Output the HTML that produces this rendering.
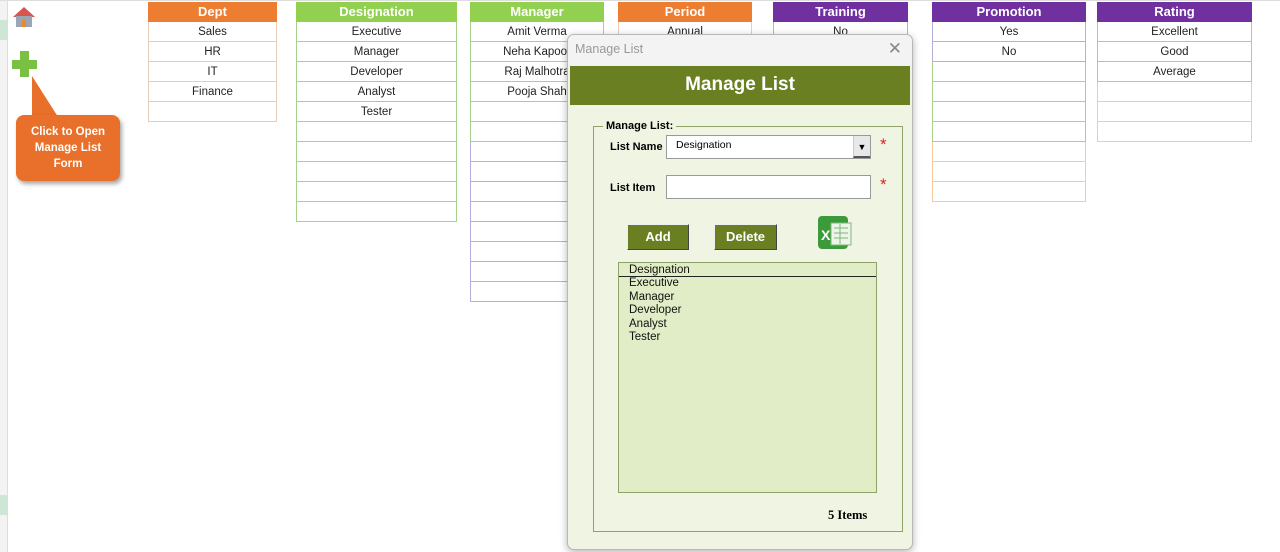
<!DOCTYPE html>
<html><head><meta charset="utf-8">
<style>
*{margin:0;padding:0;box-sizing:border-box}
body{width:1280px;height:552px;background:#fff;position:relative;overflow:hidden;font-family:"Liberation Sans",sans-serif}
.t{position:absolute;top:2px}
.h{height:20px;color:#fff;font-weight:bold;font-size:13px;text-align:center;line-height:20px}
.r{height:20px;border:1px solid #e8cdbd;border-top:none;font-size:11.5px;text-align:center;line-height:21px;color:#222;background:#fff}
.g .r{border-color:#a8d08d}
.p .r{border-color:#b4b0dc}
.a{position:absolute}
</style></head><body>
<div class="a" style="left:0;top:0;width:8px;height:552px;background:#f3f3f3;border-right:1px solid #ddd"></div>
<div class="a" style="left:0;top:20px;width:8px;height:20px;background:#cfe6d6"></div>
<div class="a" style="left:0;top:495px;width:8px;height:20px;background:#cfe6d6"></div>
<div class="a" style="left:0;top:0;width:1280px;height:1px;background:#ddd"></div>
<svg class="a" style="left:12px;top:6px" width="24" height="22" viewBox="0 0 24 22"><polygon points="12,1 23,11 1,11" fill="#d9534f"/><rect x="4" y="10" width="16" height="11" fill="#9aa5b5"/><rect x="10" y="14" width="4" height="7" fill="#e8892c"/></svg>
<div class="a" style="left:20px;top:51px;width:9px;height:26px;background:#7ac143"></div>
<div class="a" style="left:12px;top:60px;width:25px;height:9px;background:#7ac143"></div>
<svg class="a" style="left:28px;top:74px" width="40" height="48"><polygon points="4,2 4,46 32,46" fill="#e8702a"/></svg>
<div class="a" style="left:16px;top:115px;width:104px;height:66px;background:#e8702a;border-radius:8px;box-shadow:2px 3px 4px rgba(0,0,0,.35);color:#fff;font-weight:bold;font-size:11.5px;text-align:center;line-height:16px;padding-top:9px">Click to Open<br>Manage List<br>Form</div>

<div class="t" style="left:148px;width:129px"><div class="h" style="background:#ed7d31">Dept</div><div class="r">Sales</div><div class="r">HR</div><div class="r">IT</div><div class="r">Finance</div><div class="r"></div></div>
<div class="t g" style="left:296px;width:161px"><div class="h" style="background:#92d050">Designation</div><div class="r">Executive</div><div class="r">Manager</div><div class="r">Developer</div><div class="r">Analyst</div><div class="r">Tester</div><div class="r"></div><div class="r"></div><div class="r"></div><div class="r"></div><div class="r"></div></div>
<div class="t p" style="left:470px;width:134px"><div class="h" style="background:#92d050">Manager</div><div class="r" style="border-color:#a8d08d">Amit Verma</div><div class="r" style="border-color:#a8d08d">Neha Kapoor</div><div class="r" style="border-color:#a8d08d">Raj Malhotra</div><div class="r" style="border-color:#a8d08d">Pooja Shah</div><div class="r" style="border-color:#a8d08d"></div><div class="r" style="border-color:#a8d08d"></div><div class="r"></div><div class="r"></div><div class="r"></div><div class="r"></div><div class="r"></div><div class="r"></div><div class="r"></div><div class="r"></div></div>
<div class="t" style="left:618px;width:134px"><div class="h" style="background:#ed7d31">Period</div><div class="r">Annual</div></div>
<div class="t p" style="left:773px;width:135px"><div class="h" style="background:#7030a0">Training</div><div class="r">No</div></div>
<div class="t p" style="left:932px;width:154px"><div class="h" style="background:#7030a0">Promotion</div><div class="r">Yes</div><div class="r">No</div><div class="r" style="border-color:#a8d08d"></div><div class="r" style="border-color:#a8d08d"></div><div class="r" style="border-color:#a8d08d"></div><div class="r" style="border-color:#a8d08d"></div><div class="r" style="border-color:#f8cb9c"></div><div class="r" style="border-color:#f8cb9c"></div><div class="r" style="border-color:#f8cb9c"></div></div>
<div class="t p" style="left:1097px;width:155px"><div class="h" style="background:#7030a0">Rating</div><div class="r" style="border-color:#a8d08d">Excellent</div><div class="r" style="border-color:#a8d08d">Good</div><div class="r" style="border-color:#a8d08d">Average</div><div class="r" style="border-color:#f8cb9c"></div><div class="r" style="border-color:#f8cb9c"></div><div class="r" style="border-color:#f8cb9c"></div></div>

<div class="a" style="left:567px;top:34px;width:346px;height:516px;background:#f0f5e3;border:1px solid #b8b8b8;border-radius:7px;box-shadow:0 2px 8px rgba(0,0,0,.3);overflow:hidden">
  <div style="height:30px;background:#f3f3f3;color:#999;font-size:12.5px;line-height:28px;padding-left:7px;position:relative">Manage List<span style="position:absolute;right:10px;top:0;font-size:17px;color:#888">✕</span></div>
  <div style="position:absolute;left:2px;top:31px;width:340px;height:39px;background:#6a7f22;color:#fff;font-weight:bold;font-size:19px;text-align:center;line-height:38px">Manage List</div>
  <div style="position:absolute;left:25px;top:91px;width:310px;height:406px;border:1px solid #8fa26a"></div>
  <div style="position:absolute;left:35px;top:85px;background:#f0f5e3;padding:0 3px;font-weight:bold;font-size:11px">Manage List:</div>
  <div style="position:absolute;left:42px;top:106px;font-weight:bold;font-size:11px">List Name</div>
  <div style="position:absolute;left:98px;top:100px;width:205px;height:24px;background:#fff;border:1px solid #999;font-size:10.5px;padding:3px 9px">Designation</div>
  <div style="position:absolute;left:285px;top:101px;width:17px;height:22px;background:#e8e8e8;border-left:1px solid #ccc;border-bottom:2px solid #555;font-size:9px;text-align:center;line-height:22px">▼</div>
  <div style="position:absolute;left:312px;top:100px;color:#d22;font-size:17px">*</div>
  <div style="position:absolute;left:42px;top:147px;font-weight:bold;font-size:11px">List Item</div>
  <div style="position:absolute;left:98px;top:140px;width:205px;height:24px;background:#fff;border:1px solid #999"></div>
  <div style="position:absolute;left:312px;top:140px;color:#d22;font-size:17px">*</div>
  <div style="position:absolute;left:59px;top:189px;width:62px;height:26px;background:#6a7f22;border:1px solid #444;border-top-color:#eee;border-left-color:#eee;color:#fff;font-weight:bold;font-size:13px;text-align:center;line-height:24px">Add</div>
  <div style="position:absolute;left:146px;top:189px;width:63px;height:26px;background:#6a7f22;border:1px solid #444;border-top-color:#eee;border-left-color:#eee;color:#fff;font-weight:bold;font-size:13px;text-align:center;line-height:24px">Delete</div>
  <svg style="position:absolute;left:249px;top:180px" width="36" height="36" viewBox="0 0 36 36"><rect x="1" y="1" width="30" height="33" rx="4" fill="#3c9a3a"/><rect x="14" y="8" width="20" height="22" fill="#eef5e8" stroke="#7fb77c"/><path d="M17 13h14M17 18h14M17 23h14M23 9v20" stroke="#7fb77c"/><text x="4" y="25" font-family="Liberation Sans" font-weight="bold" font-size="14" fill="#fff">X</text></svg>
  <div style="position:absolute;left:50px;top:227px;width:259px;height:231px;background:#e1edc6;border:1px solid #8fa26a;font-family:'Liberation Sans',sans-serif;font-size:11.5px;line-height:13.5px;color:#111">
    <div style="padding-left:10px;border-bottom:1px solid #222;height:14px;line-height:14px">Designation</div>
    <div style="padding-left:10px">Executive<br>Manager<br>Developer<br>Analyst<br>Tester</div>
  </div>
  <div style="position:absolute;left:260px;top:473px;font-family:'Liberation Serif',serif;font-weight:bold;font-size:12.5px">5 Items</div>
</div>
</body></html>
